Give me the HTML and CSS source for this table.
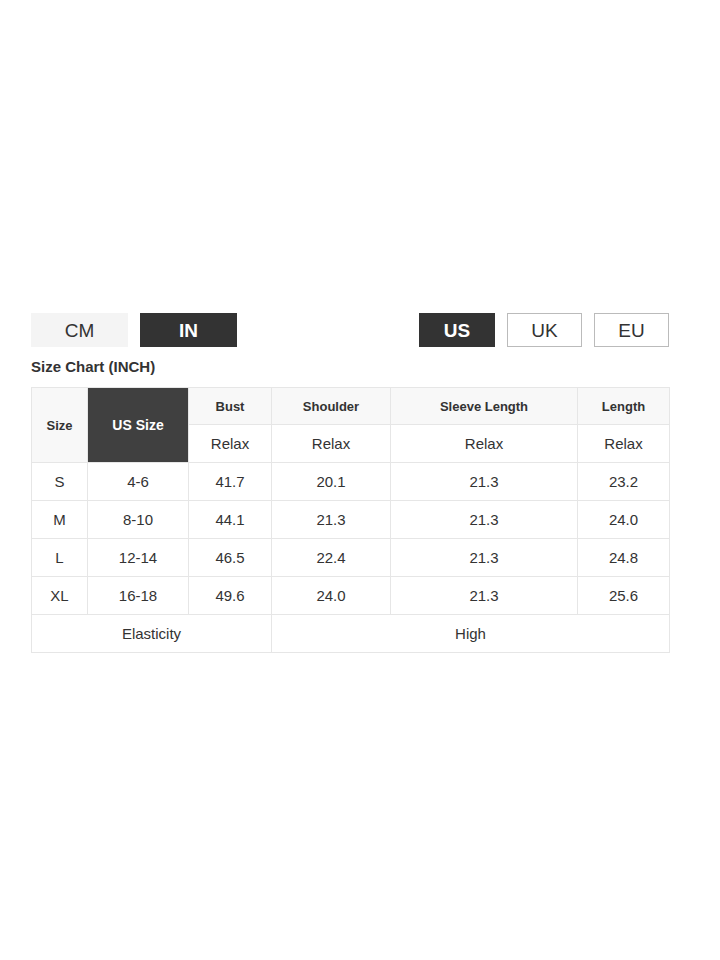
FILE: index.html
```html
<!DOCTYPE html>
<html>
<head>
<meta charset="utf-8">
<link rel="stylesheet" href="styles.css">
</head>
<body>
<div class="wrap">
  <div class="toolbar">
    <div class="group">
      <div class="btn unit light">CM</div>
      <div class="btn unit dark">IN</div>
    </div>
    <div class="group">
      <div class="btn region wide dark">US</div>
      <div class="btn region outline">UK</div>
      <div class="btn region outline">EU</div>
    </div>
  </div>
  <div class="title">Size Chart (INCH)</div>
  <table class="chart">
    <colgroup>
      <col class="c1"><col class="c2"><col class="c3"><col class="c4"><col class="c5"><col class="c6">
    </colgroup>
    <tr class="head">
      <th rowspan="2">Size</th>
      <th rowspan="2" class="us">US Size</th>
      <th>Bust</th>
      <th>Shoulder</th>
      <th>Sleeve Length</th>
      <th>Length</th>
    </tr>
    <tr>
      <td>Relax</td><td>Relax</td><td>Relax</td><td>Relax</td>
    </tr>
    <tr><td>S</td><td>4-6</td><td>41.7</td><td>20.1</td><td>21.3</td><td>23.2</td></tr>
    <tr><td>M</td><td>8-10</td><td>44.1</td><td>21.3</td><td>21.3</td><td>24.0</td></tr>
    <tr><td>L</td><td>12-14</td><td>46.5</td><td>22.4</td><td>21.3</td><td>24.8</td></tr>
    <tr><td>XL</td><td>16-18</td><td>49.6</td><td>24.0</td><td>21.3</td><td>25.6</td></tr>
    <tr><td colspan="3">Elasticity</td><td colspan="3">High</td></tr>
  </table>
</div>
</body>
</html>
```
FILE: styles.css
```css
html, body {
  margin: 0;
  padding: 0;
  background: #fff;
}
body {
  font-family: "Liberation Sans", Arial, sans-serif;
  color: #333;
}
.wrap {
  width: 638px;
  padding: 313px 0 0 31px;
}
.toolbar {
  display: flex;
  justify-content: space-between;
  height: 34px;
}
.group {
  display: flex;
  gap: 12px;
}
.btn {
  box-sizing: border-box;
  height: 34px;
  padding-top: 2px;
  display: flex;
  align-items: center;
  justify-content: center;
  font-size: 19px;
  color: #333;
}
.unit { width: 97px; }
.region { width: 75px; }
.region.wide { width: 76px; }
.light { background: #f4f4f4; }
.dark {
  background: #333;
  color: #fff;
  font-weight: bold;
}
.outline {
  border: 1px solid #bbb;
  background: #fff;
}
.title {
  font-size: 15px;
  font-weight: bold;
  margin-top: 11px;
  height: 18px;
  line-height: 18px;
}
.chart {
  margin-top: 11px;
  width: 638px;
  border-collapse: collapse;
  table-layout: fixed;
}
.c1 { width: 56px; }
.c2 { width: 101px; }
.c3 { width: 83px; }
.c4 { width: 119px; }
.c5 { width: 187px; }
.c6 { width: 92px; }
.chart th, .chart td {
  border: 1px solid #e6e6e6;
  height: 37px;
  padding: 0;
  text-align: center;
  vertical-align: middle;
  font-size: 15px;
  color: #333;
}
.chart tr.head th {
  height: 36px;
}
.chart th {
  font-size: 13px;
  font-weight: bold;
  background: #f8f8f8;
}
.chart th.us {
  background: #404040;
  color: #fff;
  font-size: 14px;
}
```
